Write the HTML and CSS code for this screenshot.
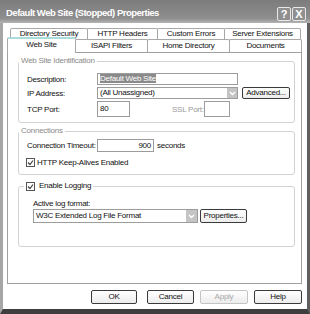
FILE: index.html
```html
<!DOCTYPE html>
<html lang="en">
<head>
    <meta charset="UTF-8">
    <title>Default Web Site (Stopped) Properties</title>
    <link rel="stylesheet" href="styles.css">
</head>
<body>
    <div class="window">
        <div class="titlebar">
            <span class="title">Default Web Site (Stopped) Properties</span>
            <span class="tb-btns">
                <span class="tb-btn">?</span>
                <span class="tb-btn">X</span>
            </span>
        </div>

        <div class="frame">
            <div class="tabrow back">
                <span class="tab t-dirsec">Directory Security</span>
                <span class="tab t-http">HTTP Headers</span>
                <span class="tab t-errors">Custom Errors</span>
                <span class="tab t-ext">Server Extensions</span>
            </div>
            <div class="tabrow front">
                <span class="tab active t-web">Web Site</span>
                <span class="tab t-isapi">ISAPI Filters</span>
                <span class="tab t-home">Home Directory</span>
                <span class="tab t-docs">Documents</span>
            </div>

            <div class="panel">
                <fieldset class="group ident">
                    <legend>Web Site Identification</legend>
                    <div class="row">
                        <span class="label">Description:</span>
                        <span class="box desc"><span class="selected">Default Web Site</span></span>
                    </div>
                    <div class="row">
                        <span class="label">IP Address:</span>
                        <span class="box combo ip">(All Unassigned)<span class="arrow"><svg width="7" height="5" viewBox="0 0 7 5"><path d="M1 1 L3.5 3.5 L6 1" fill="none" stroke="#fff" stroke-width="1.4"/></svg></span></span>
                        <span class="btn adv">Advanced...</span>
                    </div>
                    <div class="row tall">
                        <span class="label">TCP Port:</span>
                        <span class="box port">80</span>
                        <span class="ssl-label">SSL Port:</span>
                        <span class="box ssl"></span>
                    </div>
                </fieldset>

                <fieldset class="group conn">
                    <legend>Connections</legend>
                    <div class="row">
                        <span class="label">Connection Timeout:</span>
                        <span class="box timeout">900</span>
                        <span class="unit">seconds</span>
                    </div>
                    <div class="row check-row">
                        <span class="check"><svg width="7" height="7" viewBox="0 0 7 7"><path d="M1 3.5 L3 5.5 L6 1.5" fill="none" stroke="#444" stroke-width="1.2"/></svg></span>
                        <span>HTTP Keep-Alives Enabled</span>
                    </div>
                </fieldset>

                <fieldset class="group logging">
                    <legend><span class="check"><svg width="7" height="7" viewBox="0 0 7 7"><path d="M1 3.5 L3 5.5 L6 1.5" fill="none" stroke="#444" stroke-width="1.2"/></svg></span>Enable Logging</legend>
                    <div class="sub-label">Active log format:</div>
                    <div class="row">
                        <span class="box combo logfmt">W3C Extended Log File Format<span class="arrow"><svg width="7" height="5" viewBox="0 0 7 5"><path d="M1 1 L3.5 3.5 L6 1" fill="none" stroke="#fff" stroke-width="1.4"/></svg></span></span>
                        <span class="btn props">Properties...</span>
                    </div>
                </fieldset>
            </div>

            <div class="buttons">
                <span class="btn b-ok">OK</span>
                <span class="btn b-cancel">Cancel</span>
                <span class="btn b-apply disabled">Apply</span>
                <span class="btn b-help">Help</span>
            </div>
        </div>
    </div>
</body>
</html>
```

FILE: styles.css
```css
* { box-sizing: border-box; }
body { margin: 0; background: #fff; font-family: "Liberation Sans", Arial, sans-serif; font-size: 8px; letter-spacing: -0.25px; color: #111; }

.window { width: 310px; height: 314px; display: flex; flex-direction: column; background: #fff; }
.titlebar { height: 23px; flex: none; display: flex; align-items: center; justify-content: space-between; padding: 0 4px 0 6px; background: linear-gradient(#7c7c7c, #8e8e8e 80%, #b4b4b4); }
.title { color: #fff; font-weight: bold; font-size: 9.5px; letter-spacing: -0.5px; margin-top: 2px; }
.tb-btns { display: flex; gap: 1px; margin-top: 4px; }
.tb-btn { width: 14px; height: 14px; border: 1px solid #e8e8e8; border-radius: 2px; color: #fff; font-weight: bold; font-size: 11px; line-height: 12px; text-align: center; background: #909090; letter-spacing: 0; }

.frame { flex: 1; display: flex; flex-direction: column; padding: 5px 5px 0 4px; border-left: 3px solid #a6a6a6; border-right: 3px solid #5e5e5e; border-bottom: 5px solid #3e3e3e; }

.tabrow { display: flex; }
.tabrow.back { height: 11px; padding-left: 3px; }
.tabrow.front { height: 13px; }
.tab { height: 100%; border: 1px solid #a8a8a8; border-bottom: none; border-radius: 2px 2px 0 0; text-align: center; line-height: 10px; background: #fff; white-space: nowrap; }
.tabrow.front .tab { line-height: 12px; }
.tab + .tab { margin-left: -1px; }
.tab.active { position: relative; z-index: 1; height: 16px; margin-top: -2px; border-top: 2px solid #a9dcdc; line-height: 11px; }
.t-dirsec { width: 78px; }
.t-http { width: 71px; }
.t-errors { width: 68px; }
.t-ext { width: 77px; }
.t-web { width: 69px; }
.t-isapi { width: 73px; }
.t-home { width: 83px; }
.t-docs { width: 73px; }

.panel { height: 232px; border: 1px solid #a0a0a0; padding: 3px 6px 0 10px; display: flex; flex-direction: column; }

.group { margin: 0; border: 1px solid #d2d2d2; border-radius: 3px; min-width: 0; }
.group legend { padding: 0 2px; margin-left: -8px; line-height: 10px; color: #8a8a8a; }
.ident { padding: 7px 4px 5px 8px; }
.conn { margin-top: 3px; padding: 3px 4px 7px 8px; }
.logging { margin-top: 6px; padding: 8px 4px 24px 14px; }
.logging legend { margin-left: -9px; color: #111; display: flex; align-items: center; gap: 2px; }

.row { display: flex; align-items: center; height: 12px; white-space: nowrap; }
.row + .row { margin-top: 2px; }
.row.tall { height: 16px; }
.label { width: 70px; flex: none; }
.box { height: 12px; border: 1px solid #9c9c9c; padding: 0 2px; line-height: 10px; background: #fff; white-space: nowrap; }
.desc { width: 141px; }
.selected { background: #8a8a8a; color: #fff; }
.combo { position: relative; }
.arrow { position: absolute; right: 0; top: 0; width: 10px; height: 10px; background: #c4c4c4; display: flex; align-items: center; justify-content: center; }
.ip { width: 141px; }
.btn { display: inline-block; height: 12px; border: 1px solid #3a3a3a; border-radius: 2px; background: linear-gradient(#fff, #ececec); text-align: center; line-height: 10px; }
.adv { width: 48px; margin-left: 4px; }
.port { width: 33px; height: 16px; line-height: 14px; }
.ssl-label { margin-left: 42px; width: 32px; color: #9a9a9a; }
.ssl { width: 26px; height: 16px; }

.timeout { width: 57px; height: 13px; text-align: right; line-height: 11px; }
.conn .row:first-of-type { height: 13px; }
.unit { margin-left: 3px; }
.check-row { margin-top: 5px; height: 10px; margin-left: -1px; }
.conn .row + .check-row { margin-top: 5px; }
.check { width: 9px; height: 9px; border: 1px solid #555; display: inline-flex; align-items: center; justify-content: center; margin-right: 2px; background: #fff; }

.sub-label { line-height: 10px; margin-bottom: 1px; }
.logfmt { width: 165px; height: 14px; line-height: 12px; }
.logfmt .arrow { height: 12px; width: 11px; }
.props { width: 47px; height: 14px; line-height: 12px; margin-left: 2px; }

.buttons { display: flex; justify-content: flex-end; margin-top: 6px; height: 14px; }
.buttons .btn { height: 14px; line-height: 12px; }
.b-ok { width: 46px; }
.b-cancel { width: 47px; margin-left: 10px; }
.b-apply { width: 48px; margin-left: 6px; }
.b-help { width: 48px; margin-left: 6px; }
.btn.disabled { border-color: #c4c4c4; color: #a8a8a8; }
```
